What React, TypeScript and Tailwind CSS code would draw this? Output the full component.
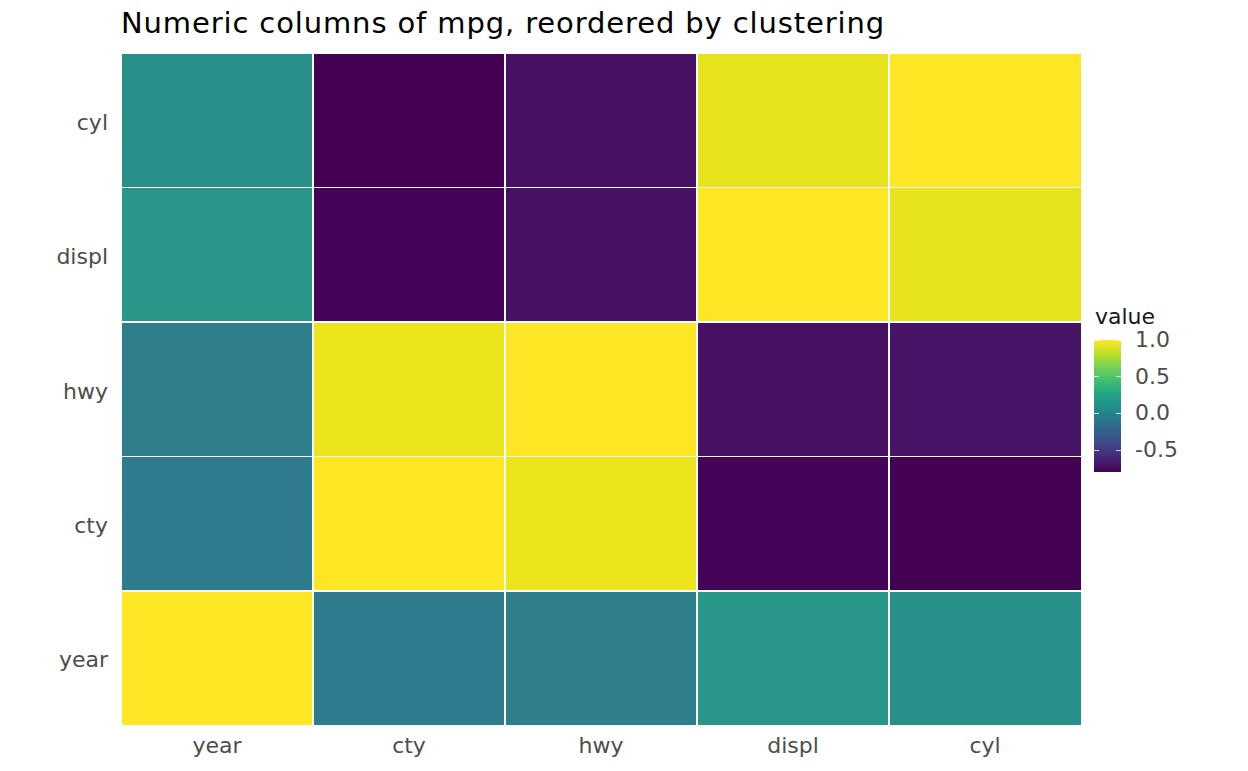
const rows = ["cyl", "displ", "hwy", "cty", "year"];
const cols = ["year", "cty", "hwy", "displ", "cyl"];

// tile colours, row by row (viridis, -0.8 .. 1.0)
const tiles = [
  ["bg-[#279089]", "bg-[#440154]", "bg-[#471063]", "bg-[#e6e31d]", "bg-[#fde725]"],
  ["bg-[#29968a]", "bg-[#450457]", "bg-[#471063]", "bg-[#fde725]", "bg-[#e6e31d]"],
  ["bg-[#2e7e8c]", "bg-[#ede51b]", "bg-[#fde725]", "bg-[#471063]", "bg-[#481467]"],
  ["bg-[#2e7b8e]", "bg-[#fde725]", "bg-[#ede51b]", "bg-[#450457]", "bg-[#440154]"],
  ["bg-[#fde725]", "bg-[#2e7b8e]", "bg-[#2e7e8c]", "bg-[#29968a]", "bg-[#279089]"],
];

const legendTicks = [
  { label: "1.0", top: "top-[0px]" },
  { label: "0.5", top: "top-[36.7px]" },
  { label: "0.0", top: "top-[73.3px]" },
  { label: "-0.5", top: "top-[110px]" },
];

function Legend() {
  return (
    <div className="ml-[13px] pt-[251px] text-[22px] text-[#4d4d4d]">
      <div className="text-[#1a1a1a] leading-[26px] pl-[1px]">value</div>
      <div className="relative mt-[10px] w-[100px] h-[132px]">
        <div className="w-[27px] h-[132px] bg-[linear-gradient(to_top,#440154_0%,#482475_10%,#414487_20%,#355f8d_30%,#2a788e_40%,#21918c_50%,#22a884_60%,#44bf70_70%,#7ad151_80%,#bddf26_90%,#fde725_100%)]" />
        {legendTicks.map((t) => (
          <div key={t.label} className={`absolute left-0 ${t.top} w-[27px] h-0`}>
            <div className="absolute left-0 top-[-0.5px] w-[5px] h-px bg-white/80" />
            <div className="absolute right-0 top-[-0.5px] w-[5px] h-px bg-white/80" />
            <div className="absolute left-[41px] top-[-13px] leading-[26px] whitespace-nowrap">{t.label}</div>
          </div>
        ))}
      </div>
    </div>
  );
}

export default function App() {
  return (
    <div className="w-[1248px] h-[771px] bg-white font-['DejaVu_Sans',sans-serif] overflow-hidden">
      <div className="h-[53px] pt-[6px] pl-[121px]">
        <h1 className="text-[29px] leading-[34px] tracking-[0.88px] text-black whitespace-nowrap">
          Numeric columns of mpg, reordered by clustering
        </h1>
      </div>
      <div className="flex">
        <div className="w-[121px] h-[672px] flex flex-col pr-[13px]">
          {rows.map((r) => (
            <div key={r} className="flex-1 flex items-center justify-end text-[22px] text-[#4d4d4d] pt-[4px]">
              {r}
            </div>
          ))}
        </div>
        <div className="w-[960px] h-[672px] grid grid-cols-5 grid-rows-5 gap-[1.5px] bg-white p-[0.5px] outline outline-1 outline-white/60">
          {tiles.flat().map((c, i) => (
            <div key={i} className={c} />
          ))}
        </div>
        <Legend />
      </div>
      <div className="flex pl-[121px] mt-[8px]">
        {cols.map((c) => (
          <div key={c} className="w-[192px] text-center text-[22px] text-[#4d4d4d] leading-[26px]">
            {c}
          </div>
        ))}
      </div>
    </div>
  );
}
